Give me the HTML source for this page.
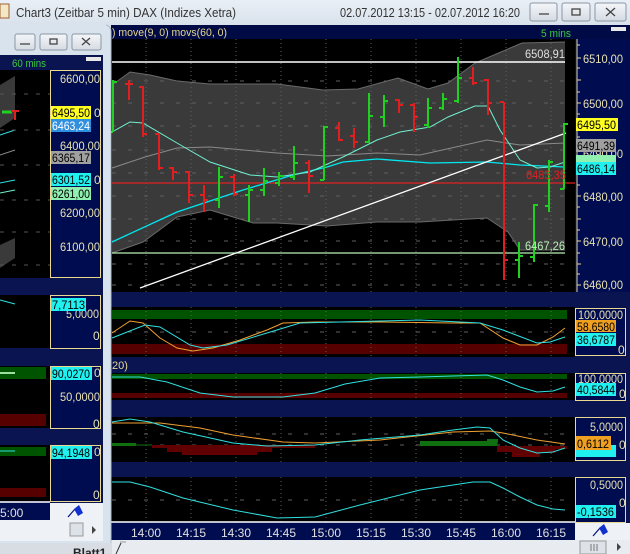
<!DOCTYPE html>
<html><head><meta charset="utf-8"><style>
html,body{margin:0;padding:0;background:#d6dde6;}
svg{display:block;font-family:"Liberation Sans",sans-serif;}
</style></head><body>
<svg width="630" height="554" viewBox="0 0 630 554" xmlns="http://www.w3.org/2000/svg">
<defs>
<linearGradient id="tb" x1="0" y1="0" x2="0" y2="1"><stop offset="0" stop-color="#e9eff6"/><stop offset="1" stop-color="#d9e2ec"/></linearGradient>
<linearGradient id="btn" x1="0" y1="0" x2="0" y2="1"><stop offset="0" stop-color="#f4f6f9"/><stop offset="1" stop-color="#d5dbe3"/></linearGradient>
</defs>
<!-- title bar -->
<rect x="0" y="0" width="630" height="25" fill="url(#tb)"/>
<rect x="0" y="4" width="9" height="14" fill="#f2e8c8" stroke="#a06030" stroke-width="1"/>
<text x="16" y="17" font-size="13" fill="#333" textLength="220" lengthAdjust="spacingAndGlyphs">Chart3 (Zeitbar 5 min)  DAX (Indizes Xetra)</text>
<text x="340" y="17" font-size="13" fill="#333" textLength="180" lengthAdjust="spacingAndGlyphs">02.07.2012 13:15 - 02.07.2012 16:20</text>
<g stroke="#8a96a4" fill="url(#btn)"><rect x="530" y="3" width="27" height="18" rx="2"/><rect x="562" y="3" width="28" height="18" rx="2"/><rect x="595" y="3" width="31" height="18" rx="2"/></g>
<g stroke="#444" fill="none" stroke-width="1.3"><path d="M539 14h10"/><rect x="572" y="9" width="8" height="6"/><path d="M606 8l9 8M615 8l-9 8"/></g>

<!-- main window background -->
<rect x="110" y="25" width="520" height="529" fill="#0a1450"/>
<rect x="110" y="25" width="520" height="14" fill="#000a44"/>
<text x="112" y="36" font-size="11" fill="#e8d890" textLength="115" lengthAdjust="spacingAndGlyphs">) move(9, 0) movs(60, 0)</text>
<text x="541" y="37" font-size="11" fill="#3cc83c" textLength="30" lengthAdjust="spacingAndGlyphs">5 mins</text>
<rect x="611" y="27" width="15" height="4" fill="#e8e8e8"/>

<!-- main plot -->
<rect x="110" y="39" width="465" height="253" fill="#000"/>
<path d="M112 85 L130 72 L150 75 L177 81 L210 84 L277 84 L323 90 L358 89 L398 78 L428 89 L448 83 L475 63 L522 43 L565 42 L565 143 L565 250 L520 250 L508 232 L487 218 L453 220 L420 222 L377 222 L327 226 L277 223 L253 223 L210 210 L177 217 L143 242 L112 253 Z" fill="#3a3a3a"/>
<path d="M112 85 L130 72 L150 75 L177 81 L210 84 L277 84 L323 90 L358 89 L398 78 L428 89 L448 83 L475 63 L522 43 L565 42" fill="none" stroke="#6a6a6a"/>
<path d="M112 253 L143 242 L177 217 L210 210 L253 223 L277 223 L327 226 L377 222 L420 222 L453 220 L487 218 L508 232 L520 250 L565 250" fill="none" stroke="#6a6a6a"/>
<g stroke="#606060" stroke-dasharray="1,3" stroke-width="1">
<path d="M146 39V292M191 39V292M236 39V292M281 39V292M326 39V292M371 39V292M416 39V292M461 39V292M506 39V292M551 39V292"/>
<path d="M112 81H575M112 103H575M112 126H575M112 150H575M112 173H575M112 196H575M112 219H575M112 241H575M112 264H575M112 285H575" stroke-dasharray="4,12"/>
</g>
<path d="M112 168 L145 157 L177 148 L210 147 L277 153 L327 156 L377 153 L420 155 L487 140 L520 145 L565 143" fill="none" stroke="#8a8a8a"/>
<path d="M112 62H565" stroke="#fff" stroke-width="1.5"/>
<path d="M112 183H575" stroke="#e02020" stroke-width="1.2"/>
<path d="M112 253H565" stroke="#b8f0b8" stroke-width="1.2"/>
<path d="M112 242 L177 212 L243 190 L293 175 L327 167 L343 162 L377 159 L430 163 L487 162 L520 165 L565 167" fill="none" stroke="#00e8f0" stroke-width="1.3"/>
<path d="M112 132 L130 122 L143 123 L177 143 L210 162 L250 175 L277 177 L310 172 L343 157 L377 140 L400 132 L430 127 L448 117 L475 106 L488 106 L500 130 L520 160 L537 168 L550 167 L565 162" fill="none" stroke="#70f0d0" stroke-width="1"/>
<path d="M140 288 L566 133" stroke="#fff" stroke-width="1.3"/>
<g stroke-width="2" fill="none">
<path stroke="#20d020" d="M113 80V132M109 132H113M113 82H117 M219 167V208M215 200H219M219 177H223 M249 185V222M245 195H249M249 190H253 M264 168V196M260 190H264M264 181H268 M279 172V186M275 183H279M279 176H283 M294 146V180M290 177H294M294 163H298 M324 126V180M320 180H324M324 127H328 M369 93V143M365 142H369M369 116H373 M384 95V127M380 117H384M384 101H388 M428 98V128M424 125H428M428 108H432 M443 93V110M439 108H443M443 99H447 M458 57V103M454 101H458M458 78H462 M519 242V278M515 260H519M519 256H523 M534 204V262M530 257H534M534 205H538 M549 160V212M545 206H549M549 162H553 M564 123V189M560 189H564M564 124H568"/>
<path stroke="#e02020" d="M129 80V100M125 84H129M129 84H133 M143 86V137M139 87H143M143 134H147 M159 133V170M155 134H159M159 168H163 M173 167V180M169 168H173M173 172H177 M189 171V203M185 172H189M189 195H193 M204 185V212M200 195H204M204 200H208 M234 174V196M230 177H234M234 194H238 M309 160V193M305 163H309M309 176H313 M339 122V141M335 128H339M339 140H343 M354 128V148M350 136H354M354 142H358 M399 99V113M395 100H399M399 105H403 M414 103V132M410 105H414M414 117H418 M473 67V85M469 78H473M473 83H477 M488 79V115M484 80H488M488 103H492 M504 102V280M500 102H504M504 260H508"/>
</g>
<g font-size="12" lengthAdjust="spacingAndGlyphs">
<text x="525" y="58" fill="#e0e0e0" textLength="40" lengthAdjust="spacingAndGlyphs">6508,91</text>
<text x="526" y="179" fill="#e02020" textLength="40" lengthAdjust="spacingAndGlyphs">6483,35</text>
<text x="525" y="250" fill="#b8f0b8" textLength="40" lengthAdjust="spacingAndGlyphs">6467,26</text>
</g>

<!-- main right axis -->
<rect x="575" y="39" width="55" height="253" fill="#000c50"/>
<path d="M577 39V292" stroke="#e8d890" stroke-width="1"/>
<path d="M577 45h3M577 58h4M577 68h3M577 80h4M577 92h3M577 103h4M577 114h3M577 126h4M577 137h3M577 150h4M577 162h3M577 173h4M577 185h3M577 196h4M577 207h3M577 219h4M577 230h3M577 241h4M577 253h3M577 264h4M577 274h3M577 285h4" stroke="#e8d890"/>
<g font-size="12" fill="#e8e0b0">
<text x="583" y="63" textLength="40" lengthAdjust="spacingAndGlyphs">6510,00</text><text x="583" y="108" textLength="40" lengthAdjust="spacingAndGlyphs">6500,00</text><text x="583" y="158" textLength="40" lengthAdjust="spacingAndGlyphs">6490,00</text><text x="583" y="201" textLength="40" lengthAdjust="spacingAndGlyphs">6480,00</text><text x="583" y="246" textLength="40" lengthAdjust="spacingAndGlyphs">6470,00</text><text x="583" y="289" textLength="40" lengthAdjust="spacingAndGlyphs">6460,00</text>
</g>
<rect x="576" y="118" width="42" height="13" fill="#ffff20"/><text x="577" y="129" font-size="12" fill="#000" textLength="39" lengthAdjust="spacingAndGlyphs">6495,50</text>
<rect x="576" y="139" width="40" height="13" fill="#a0a0a0"/><text x="577" y="150" font-size="12" fill="#000" textLength="38" lengthAdjust="spacingAndGlyphs">6491,39</text>
<rect x="576" y="155" width="40" height="8" fill="#90f0b0"/>
<rect x="576" y="162" width="40" height="13" fill="#20f0f0"/><text x="577" y="173" font-size="12" fill="#000" textLength="38" lengthAdjust="spacingAndGlyphs">6486,14</text>

<!-- panels -->
<rect x="110" y="307" width="465" height="50" fill="#000"/>
<rect x="112" y="310" width="455" height="9" fill="#005400"/>
<rect x="112" y="344" width="455" height="10" fill="#560000"/>
<text x="112" y="369" font-size="11" fill="#e8d890">20)</text>
<rect x="110" y="373" width="465" height="27" fill="#000"/>
<rect x="112" y="374" width="455" height="5" fill="#005400"/>
<rect x="112" y="393" width="455" height="5" fill="#560000"/>
<rect x="110" y="417" width="465" height="45" fill="#000"/>
<rect x="110" y="477" width="465" height="45" fill="#000"/>
<g stroke="#606060" stroke-dasharray="1,3">
<path d="M146 307V357M191 307V357M236 307V357M281 307V357M326 307V357M371 307V357M416 307V357M461 307V357M506 307V357M551 307V357"/>
<path d="M146 373V400M191 373V400M236 373V400M281 373V400M326 373V400M371 373V400M416 373V400M461 373V400M506 373V400M551 373V400"/>
<path d="M146 417V462M191 417V462M236 417V462M281 417V462M326 417V462M371 417V462M416 417V462M461 417V462M506 417V462M551 417V462"/>
<path d="M146 477V522M191 477V522M236 477V522M281 477V522M326 477V522M371 477V522M416 477V522M461 477V522M506 477V522M551 477V522"/>
<path d="M112 332H567M112 434H567M112 445H567M112 500H567" stroke-dasharray="4,12"/>
</g>
<path d="M112 333 L130 321 L143 323 L160 338 L177 348 L193 351 L213 348 L240 340 L267 330 L283 323 L315 322 L380 322 L453 323 L480 323 L503 338 L520 345 L537 345 L553 337 L565 328" fill="none" stroke="#f0a030" stroke-width="1"/>
<path d="M112 338 L145 325 L160 327 L190 345 L203 348 L227 345 L267 333 L300 323 L380 321 L420 320 L480 323 L503 330 L537 343 L550 342 L565 337" fill="none" stroke="#30e0e0" stroke-width="1"/>
<path d="M112 377 L140 377 L167 382 L200 393 L233 397 L283 397 L315 393 L345 384 L380 378 L420 377 L453 376 L487 375 L503 380 L520 387 L537 392 L553 391 L565 387" fill="none" stroke="#30e0e0" stroke-width="1"/>
<rect x="112" y="443" width="24" height="3" fill="#107010"/>
<path d="M136 445H152" stroke="#107010"/>
<path d="M152 445 L152 448 L167 448 L167 452 L182 452 L182 455 L257 455 L257 452 L272 452 L272 448 L315 448 L315 445Z" fill="#600000"/>
<path d="M420 441 L487 441 L487 439 L498 439 L498 441 L497 446 L420 446Z" fill="#107010"/>
<path d="M497 446 L497 452 L512 452 L512 457 L540 457 L540 453 L555 453 L555 449 L567 449 L567 446Z" fill="#600000"/>
<path d="M112 423 L160 423 L200 428 L233 435 L283 442 L315 443 L380 440 L453 432 L490 431 L503 433 L537 440 L565 444" fill="none" stroke="#f0a030" stroke-width="1"/>
<path d="M112 422 L130 419 L150 422 L183 432 L233 443 L267 446 L315 445 L360 440 L420 435 L453 430 L477 427 L490 428 L503 440 L520 448 L537 453 L553 452 L565 448" fill="none" stroke="#30e0e0" stroke-width="1"/>
<path d="M112 482 L130 482 L150 487 L183 498 L233 510 L277 518 L315 517 L360 505 L420 490 L453 485 L473 482 L490 482 L503 488 L520 497 L537 505 L553 509 L565 510" fill="none" stroke="#30e0e0" stroke-width="1"/>
<path d="M110 522H575" stroke="#fff" stroke-width="1.5"/>

<!-- panel axes -->
<g fill="#000c50" stroke="#e8d890" stroke-width="1">
<rect x="575.5" y="308.5" width="50" height="47"/>
<rect x="575.5" y="373.5" width="50" height="27"/>
<rect x="575.5" y="417.5" width="50" height="43"/>
<rect x="575.5" y="477.5" width="50" height="45"/>
</g>
<g font-size="12" fill="#e8e0b0">
<text x="578" y="319" textLength="45" lengthAdjust="spacingAndGlyphs">100,0000</text><text x="618" y="354">0</text>
<text x="578" y="383" textLength="45" lengthAdjust="spacingAndGlyphs">100,0000</text><text x="619" y="398">0</text>
<text x="590" y="431" textLength="33" lengthAdjust="spacingAndGlyphs">5,0000</text><text x="619" y="449">0</text>
<text x="590" y="489" textLength="33" lengthAdjust="spacingAndGlyphs">0,5000</text><text x="619" y="507">0</text>
</g>
<rect x="576" y="320" width="40" height="12" fill="#f0a020"/><text x="577" y="331" font-size="12" fill="#000" textLength="38" lengthAdjust="spacingAndGlyphs">58,6580</text>
<rect x="576" y="333" width="40" height="13" fill="#20f0f0"/><text x="577" y="344" font-size="12" fill="#000" textLength="38" lengthAdjust="spacingAndGlyphs">36,6787</text>
<rect x="576" y="383" width="40" height="13" fill="#20f0f0"/><text x="577" y="394" font-size="12" fill="#000" textLength="38" lengthAdjust="spacingAndGlyphs">40,5844</text>
<rect x="576" y="445" width="40" height="12" fill="#20f0f0"/>
<rect x="576" y="436" width="35" height="14" fill="#f0a020"/><text x="577" y="448" font-size="12" fill="#000" textLength="32" lengthAdjust="spacingAndGlyphs">0,6112</text>
<rect x="576" y="505" width="40" height="13" fill="#20f0f0"/><text x="577" y="516" font-size="12" fill="#000" textLength="37" lengthAdjust="spacingAndGlyphs">-0,1536</text>

<!-- x axis -->
<rect x="110" y="523" width="465" height="17" fill="#000c50"/>
<g font-size="12" fill="#e0e0e0" text-anchor="middle">
<text x="146" y="537">14:00</text><text x="191" y="537">14:15</text><text x="236" y="537">14:30</text><text x="281" y="537">14:45</text><text x="326" y="537">15:00</text><text x="371" y="537">15:15</text><text x="416" y="537">15:30</text><text x="461" y="537">15:45</text><text x="506" y="537">16:00</text><text x="551" y="537">16:15</text>
</g>
<rect x="575" y="523" width="55" height="17" fill="#eef2f6"/>
<path d="M593 536 L600 528" stroke="#001080" stroke-width="1.2"/><path d="M599 528 L604 524 L608 532 L603 535Z" fill="#1030d0"/>
<rect x="110" y="540" width="520" height="14" fill="#e8ecf0"/>
<path d="M120 542 L126 542" stroke="#999"/>
<rect x="580" y="541" width="26" height="13" fill="#dde2e8" stroke="#999"/>
<path d="M591 544v7M594 544v7M597 544v7" stroke="#777"/>
<path d="M617 543 L621 547 L617 551Z" fill="#444"/>

<!-- left child window -->
<rect x="0" y="25" width="111" height="518" fill="#d8e3ee"/>
<path d="M106 25 Q111 26 111 32 V543" stroke="#b0bccc" fill="none"/>
<g stroke="#8a96a4" fill="url(#btn)"><rect x="15" y="34" width="20" height="16" rx="2"/><rect x="40" y="34" width="27" height="16" rx="2"/><rect x="72" y="34" width="29" height="16" rx="2"/></g>
<g stroke="#444" fill="none" stroke-width="1.3"><path d="M20 44h10"/><rect x="50" y="39" width="7" height="5"/><path d="M82 38l8 7M90 38l-8 7"/></g>
<rect x="0" y="55" width="103" height="448" fill="#0a1450"/>
<text x="12" y="67" font-size="11" fill="#3cc83c" textLength="34" lengthAdjust="spacingAndGlyphs">60 mins</text>
<rect x="86" y="57" width="15" height="4" fill="#e8e8e8"/>
<rect x="0" y="70" width="50" height="208" fill="#000"/>
<path d="M0 85 L15 76 L15 118 L0 128Z" fill="#3a3a3a"/>
<path d="M0 135 L15 130" stroke="#30e0e0"/>
<path d="M0 155 L15 150" stroke="#888"/>
<path d="M0 183 L15 180" stroke="#30e0e0"/>
<path d="M0 193 L15 190" stroke="#70f0d0"/>
<path d="M0 245 L15 238 L15 258 L0 268Z" fill="#3a3a3a"/>
<g stroke="#555" stroke-dasharray="4,8"><path d="M0 94H50M0 130H50M0 165H50M0 200H50M0 232H50M0 265H50"/></g>
<path d="M2 112H12" stroke="#20d020" stroke-width="3"/><path d="M15 110V120M11 111H19" stroke="#e02020" stroke-width="2"/>
<rect x="50.5" y="70.5" width="50" height="207" fill="#000c50" stroke="#e8d890"/>
<g font-size="12" fill="#e8e0b0">
<text x="60" y="83" textLength="40" lengthAdjust="spacingAndGlyphs">6600,00</text><text x="94" y="117">0</text><text x="60" y="150" textLength="40" lengthAdjust="spacingAndGlyphs">6400,00</text><text x="94" y="184">0</text><text x="60" y="217" textLength="40" lengthAdjust="spacingAndGlyphs">6200,00</text><text x="60" y="251" textLength="40" lengthAdjust="spacingAndGlyphs">6100,00</text>
</g>
<rect x="51" y="106" width="40" height="13" fill="#ffff20"/><text x="52" y="117" font-size="12" fill="#000" textLength="38" lengthAdjust="spacingAndGlyphs">6495,50</text>
<rect x="51" y="119" width="40" height="13" fill="#3090e0"/><text x="52" y="130" font-size="12" fill="#fff" textLength="38" lengthAdjust="spacingAndGlyphs">6463,24</text>
<rect x="51" y="151" width="40" height="13" fill="#a0a0a0"/><text x="52" y="162" font-size="12" fill="#000" textLength="38" lengthAdjust="spacingAndGlyphs">6365,17</text>
<rect x="51" y="173" width="40" height="13" fill="#20f0f0"/><text x="52" y="184" font-size="12" fill="#000" textLength="38" lengthAdjust="spacingAndGlyphs">6301,52</text>
<rect x="51" y="187" width="40" height="13" fill="#90f0b0"/><text x="52" y="198" font-size="12" fill="#000" textLength="38" lengthAdjust="spacingAndGlyphs">6261,00</text>
<rect x="0" y="295" width="50" height="53" fill="#000"/>
<path d="M0 300 L15 304" stroke="#30e0e0"/>
<rect x="0" y="366" width="50" height="62" fill="#000"/>
<rect x="0" y="367" width="46" height="12" fill="#005400"/><path d="M0 373H15" stroke="#9fe09f" stroke-width="2"/>
<rect x="0" y="414" width="46" height="12" fill="#560000"/>
<rect x="0" y="445" width="50" height="56" fill="#000"/>
<rect x="0" y="447" width="46" height="9" fill="#005400"/><path d="M0 451H15" stroke="#30e0e0"/>
<rect x="0" y="488" width="46" height="9" fill="#560000"/>
<g fill="#000c50" stroke="#e8d890">
<rect x="50.5" y="295.5" width="50" height="53"/><rect x="50.5" y="366.5" width="50" height="62"/><rect x="50.5" y="445.5" width="50" height="56"/>
</g>
<g font-size="12" fill="#e8e0b0">
<text x="66" y="318" textLength="33" lengthAdjust="spacingAndGlyphs">5,0000</text><text x="93" y="340">0</text>
<text x="60" y="401" textLength="40" lengthAdjust="spacingAndGlyphs">50,0000</text><text x="93" y="428">0</text><text x="94" y="377">0</text>
<text x="94" y="456">0</text><text x="93" y="499">0</text>
</g>
<rect x="51" y="298" width="35" height="13" fill="#20f0f0"/><text x="52" y="309" font-size="12" fill="#000" textLength="33" lengthAdjust="spacingAndGlyphs">7,7113</text>
<rect x="51" y="367" width="41" height="13" fill="#20f0f0"/><text x="52" y="378" font-size="12" fill="#000" textLength="38" lengthAdjust="spacingAndGlyphs">90,0270</text>
<rect x="51" y="446" width="41" height="13" fill="#20f0f0"/><text x="52" y="457" font-size="12" fill="#000" textLength="38" lengthAdjust="spacingAndGlyphs">94,1948</text>
<path d="M0 502H50" stroke="#fff" stroke-width="1.5"/>
<rect x="0" y="503" width="50" height="17" fill="#000c50"/>
<text x="0" y="517" font-size="12" fill="#e0e0e0">5:00</text>
<rect x="50" y="503" width="53" height="17" fill="#eef2f6"/>
<path d="M68 517 L75 509" stroke="#001080" stroke-width="1.2"/><path d="M74 509 L79 505 L83 513 L78 516Z" fill="#1030d0"/>
<rect x="0" y="520" width="103" height="21" fill="#eef2f6"/>
<rect x="70" y="523" width="13" height="13" fill="#dde2e8" stroke="#999"/>
<path d="M92 526 L96 530 L92 534Z" fill="#444"/>
<rect x="0" y="543" width="112" height="11" fill="#d8dde4"/>
<text x="73" y="557" font-size="12" font-weight="bold" fill="#222">Blatt1</text>
<path d="M116 554 L121 543" stroke="#333"/>
</svg>
</body></html>
